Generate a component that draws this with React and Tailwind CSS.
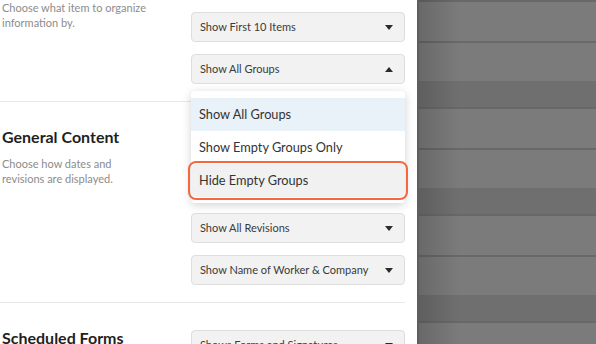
import React from "react";

const Caret = ({ up }) => (
  <svg
    width="8"
    height="5"
    viewBox="0 0 8 5"
    className={up ? "rotate-180" : ""}
  >
    <path d="M0 0h8L4 5z" fill="#2b2b2b" />
  </svg>
);

const Select = ({ label, up }) => (
  <div className="h-[30px] flex items-center justify-between pl-2 pr-[11px] bg-[#f2f2f2] border border-[#dedede] rounded-[4px] text-[11px] text-[#3a3a3a]">
    <span className="whitespace-nowrap">{label}</span>
    <Caret up={up} />
  </div>
);

const Dropdown = () => (
  <div className="absolute left-0 right-0 top-[37px] z-10 bg-white rounded-[4px] shadow-[0_2px_10px_rgba(0,0,0,0.18)] pt-[7px] pb-[6px] text-[12.75px] text-[#333]">
    <div className="h-[33px] flex items-center px-2 bg-[#e9f1f9]">Show All Groups</div>
    <div className="h-[33px] flex items-center px-2">Show Empty Groups Only</div>
    <div className="h-[33px] flex items-center px-2 bg-[#f1f1f1] rounded-[5px] outline-2 outline-[#f3683f] outline-offset-1">
      Hide Empty Groups
    </div>
  </div>
);

const Section = ({ title, desc, children, last, descGap = "mt-[9px]" }) => (
  <div
    className={`flex pt-[27px] pb-[17px] ${last ? "" : "border-b border-[#e8e8e8]"}`}
  >
    <div className="w-[191px] pl-[2px]">
      <h3 className="text-[16px] leading-5 font-bold text-[#1f1f1f] -mt-[2px]">
        {title}
      </h3>
      <p className={`w-[150px] ${descGap} text-[11px] leading-[15px] text-[#8c8c8c]`}>
        {desc}
      </p>
    </div>
    <div className="w-[214px] flex flex-col gap-3">{children}</div>
  </div>
);

// background list rows behind the modal overlay
const groups = [0, 1, 2, 3];

export default function App() {
  return (
    <div
      className="w-[596px] h-[344px] flex overflow-hidden bg-white"
      style={{ fontFamily: 'Lato, "Noto Sans", sans-serif' }}
    >
      {/* Settings panel */}
      <div className="w-[417px] shrink-0 bg-white">
        <div className="-mt-[57px] w-[405px]">
          <Section
            title="Display Options"
            desc="Choose what item to organize information by."
            descGap="mt-[12px]"
          >
            <Select label="Group by Location" />
            <Select label="Show First 10 Items" />
            <div className="relative">
              <Select label="Show All Groups" up />
              <Dropdown />
            </div>
          </Section>

          <Section
            title="General Content"
            desc="Choose how dates and revisions are displayed."
          >
            <Select label="Show Dates as MM/DD/YYYY" />
            <Select label="Show Latest Revision First" />
            <Select label="Show All Revisions" />
            <Select label="Show Name of Worker & Company" />
          </Section>

          <Section title="Scheduled Forms" desc="Choose which forms are shown." last>
            <Select label="Shows Forms and Signatures" />
            <Select label="Show All Forms" />
          </Section>
        </div>
      </div>

      {/* Dimmed page behind */}
      <div className="relative flex-1 border-l-2 border-[#5e5e5e]">
        {groups.map((g) => (
          <div key={g}>
            <div className="h-[41px] bg-[#7b7b7b] border-t-2 border-[#686868]" />
            <div className="h-[40px] bg-[#7b7b7b] border-t-2 border-[#686868]" />
            <div className="h-[26px] bg-[#6f6f6f]" />
          </div>
        ))}
        <div className="absolute inset-y-0 left-0 w-[40px] bg-gradient-to-r from-black/15 to-transparent" />
      </div>
    </div>
  );
}
